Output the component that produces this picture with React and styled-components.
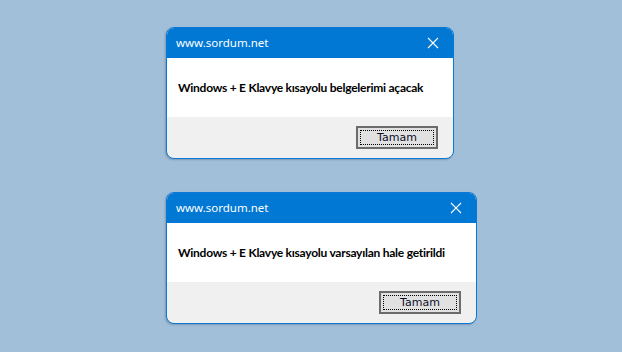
import React from 'react';
import styled, { createGlobalStyle } from 'styled-components';

const GlobalStyle = createGlobalStyle`
  html, body {
    margin: 0;
    padding: 0;
    background: #a2bfd9;
  }
  body {
    width: 622px;
    height: 352px;
    overflow: hidden;
  }
`

const Desktop = styled.div`
  display: flex;
  flex-direction: column;
  align-items: flex-start;
  gap: 33px;
  padding: 27px 0 0 166px;
  height: 352px;
  box-sizing: border-box;
`

const Dialog = styled.div`
  display: flex;
  flex-direction: column;
  width: ${({ w }) => w}px;
  height: 132px;
  box-sizing: border-box;
  border: 1px solid #0a78d4;
  border-radius: 8px;
  overflow: hidden;
  background: #f0f0f0;
  box-shadow: -1px 1px 2px rgba(60, 80, 100, 0.35);
`

const TitleBar = styled.div`
  display: flex;
  align-items: center;
  justify-content: space-between;
  height: 30px;
  padding: 0 10px 0 9px;
  background: #0078d4;
  color: #fff;
  font-family: "Noto Sans", "Open Sans", sans-serif;
  font-size: 11.5px;
`

const Title = styled.span`
  margin-top: -1px;
`

const Close = styled.svg`
  width: 12px;
  height: 12px;
  margin-right: 4px;
`

const Message = styled.div`
  display: flex;
  align-items: center;
  height: 59px;
  padding: 0 11px;
  background: #fff;
  color: #000;
  font-family: Lato, "Liberation Sans", sans-serif;
  font-weight: bold;
  font-size: 12px;
  letter-spacing: -0.25px;
  white-space: nowrap;
`

const Footer = styled.div`
  flex: 1;
  display: flex;
  align-items: flex-start;
  justify-content: flex-end;
  padding: 9px 15px 0 0;
`

const Button = styled.button`
  width: 82px;
  height: 23px;
  box-sizing: border-box;
  padding: 2px;
  border: 2px solid #6b6b6b;
  background: #e1e1e1;
  font-family: Tahoma, "DejaVu Sans", sans-serif;
  font-size: 11px;
  color: #0a0d2a;
  cursor: pointer;
`

const Focus = styled.span`
  display: flex;
  align-items: center;
  justify-content: center;
  height: 100%;
  border: 1px dotted #000;
  box-sizing: border-box;
`

function MessageBox({ width, text }) {
  return (
    <Dialog w={width}>
      <TitleBar>
        <Title>www.sordum.net</Title>
        <Close viewBox="0 0 12 12">
          <path d="M1 1 L11 11 M11 1 L1 11" stroke="#fff" strokeWidth="1.1" fill="none" />
        </Close>
      </TitleBar>
      <Message>{text}</Message>
      <Footer>
        <Button>
          <Focus>Tamam</Focus>
        </Button>
      </Footer>
    </Dialog>
  )
}

export default function App() {
  return (
    <>
      <GlobalStyle />
      <Desktop>
        <MessageBox width={288} text="Windows + E Klavye kısayolu belgelerimi açacak" />
        <MessageBox width={311} text="Windows + E Klavye kısayolu varsayılan hale getirildi" />
      </Desktop>
    </>
  )
}
